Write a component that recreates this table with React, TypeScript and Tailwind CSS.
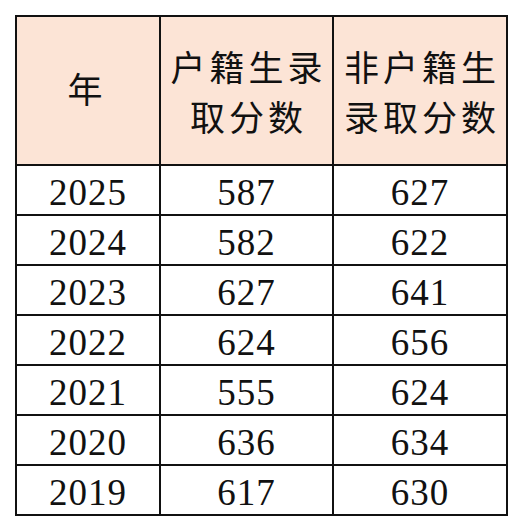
import React from "react";

const rows: [string, string, string][] = [
  ["2025", "587", "627"],
  ["2024", "582", "622"],
  ["2023", "627", "641"],
  ["2022", "624", "656"],
  ["2021", "555", "624"],
  ["2020", "636", "634"],
  ["2019", "617", "630"],
];

export default function App() {
  return (
    <div className="w-[524px] h-[532px] bg-white pt-[15px] pl-[15px]">
      <div className="inline-grid grid-cols-[142px_171px_172px] gap-[2px] bg-[#111] p-[2px]">
        <div className="bg-[#fce4d6] h-[147px] flex items-center justify-center text-[35px] text-[#111] pr-[6px] pb-[4px] font-['Noto_Sans_CJK_SC',sans-serif]">
          年
        </div>
        <div className="bg-[#fce4d6] h-[147px] flex flex-col items-center justify-center text-[35px] leading-[50px] tracking-[4px] pl-[4px] text-[#111] font-['Noto_Sans_CJK_SC',sans-serif]">
          <span>户籍生录</span>
          <span>取分数</span>
        </div>
        <div className="bg-[#fce4d6] h-[147px] flex flex-col items-center justify-center text-[35px] leading-[50px] tracking-[4px] pl-[4px] text-[#111] font-['Noto_Sans_CJK_SC',sans-serif]">
          <span>非户籍生</span>
          <span>录取分数</span>
        </div>
        {rows.map((r) => (
          <React.Fragment key={r[0]}>
            {r.map((v, i) => (
              <div
                key={i}
                className="bg-white h-[48px] flex items-center justify-center text-[37px] leading-none text-[#111] tracking-[1px] pt-[4px] font-['Liberation_Serif',serif]"
              >
                {v}
              </div>
            ))}
          </React.Fragment>
        ))}
      </div>
    </div>
  );
}
